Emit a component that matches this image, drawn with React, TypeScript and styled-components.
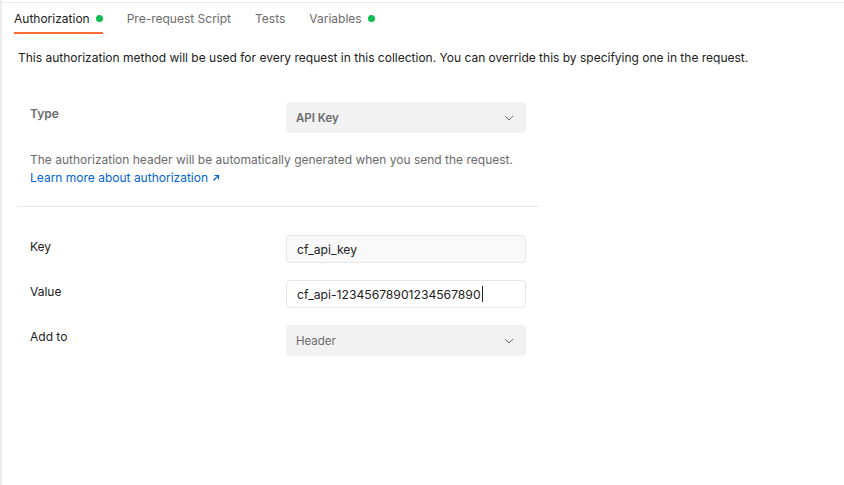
import styled, { createGlobalStyle } from 'styled-components';

const GlobalStyle = createGlobalStyle`
  html, body {
    margin: 0;
    padding: 0;
    background: #ffffff;
  }
  body {
    font-family: Inter, 'Noto Sans', sans-serif;
    -webkit-font-smoothing: antialiased;
  }
`;

const Page = styled.div`
  width: 844px;
  height: 485px;
  box-sizing: border-box;
  border-left: 2px solid #ececec;
  padding-top: 2px;
  overflow: hidden;
`;

const TopRule = styled.div`
  height: 1px;
  background: #ebebeb;
`;

const TabBar = styled.div`
  display: flex;
  gap: 24px;
  padding-left: 12px;
  height: 31px;
`;

const Tab = styled.div<{ $active?: boolean }>`
  display: flex;
  align-items: center;
  gap: 6px;
  height: 100%;
  box-sizing: border-box;
  padding-top: 2px;
  font-size: 12px;
  color: ${(p) => (p.$active ? '#212121' : '#6b6b6b')};
  border-bottom: 2px solid ${(p) => (p.$active ? '#ff6c37' : 'transparent')};
`;

const Dot = styled.span`
  width: 7px;
  height: 7px;
  border-radius: 50%;
  background: #0cbb52;
`;

const Body = styled.div`
  padding: 0 0 0 15px;
`;

const Intro = styled.p`
  margin: 15px 0 0 1px;
  font-size: 12px;
  line-height: 18px;
  color: #212121;
`;

const Section = styled.div`
  width: 522px;
  padding: 0 13px;
  box-sizing: border-box;
`;

const TypeSection = styled(Section)`
  margin-top: 35px;
  padding-bottom: 19px;
  border-bottom: 1px solid #e6e6e6;
`;

const Fields = styled(Section)`
  margin-top: 28px;
  display: flex;
  flex-direction: column;
  gap: 17px;
`;

const Row = styled.div`
  display: grid;
  grid-template-columns: 256px 240px;
  align-items: start;
`;

const Label = styled.div<{ $muted?: boolean }>`
  font-size: 12px;
  line-height: 18px;
  padding-top: 3px;
  font-weight: ${(p) => (p.$muted ? 600 : 400)};
  color: ${(p) => (p.$muted ? '#6b6b6b' : '#212121')};
`;

const Select = styled.div<{ $bold?: boolean }>`
  height: 31px;
  box-sizing: border-box;
  background: #f2f2f2;
  border-radius: 4px;
  padding: 0 12px 0 10px;
  display: flex;
  align-items: center;
  justify-content: space-between;
  font-size: 11.5px;
  font-weight: ${(p) => (p.$bold ? 600 : 400)};
  color: #6b6b6b;
`;

const Input = styled.div<{ $filled?: boolean }>`
  height: 28px;
  box-sizing: border-box;
  background: ${(p) => (p.$filled ? '#f9f9f9' : '#ffffff')};
  border: 1px solid #e6e6e6;
  border-radius: 4px;
  padding: 0 10px;
  display: flex;
  align-items: center;
  font-size: 12.15px;
  color: #212121;
`;

const Caret = styled.span`
  display: inline-block;
  width: 1px;
  height: 16px;
  background: #212121;
  margin-left: 1px;
`;

const Help = styled.p`
  margin: 18px 0 0 0;
  font-size: 12px;
  line-height: 18px;
  color: #6b6b6b;
`;

const Link = styled.a`
  color: #0265d2;
  text-decoration: none;
  display: inline-flex;
  align-items: center;
  gap: 4px;
`;

function Chevron() {
  return (
    <svg width='10' height='6' viewBox='0 0 10 6' fill='none'>
      <path d='M1 1l4 4 4-4' stroke='#6b6b6b' strokeWidth='1' />
    </svg>
  );
}

function ArrowUpRight() {
  return (
    <svg width='8' height='8' viewBox='0 0 8 8' fill='none'>
      <path d='M1.5 6.5L6.5 1.5M2.5 1.5h4v4' stroke='#0265d2' strokeWidth='1.2' />
    </svg>
  );
}

export default function App() {
  return (
    <>
      <GlobalStyle />
      <Page>
        <TopRule />
        <TabBar>
          <Tab $active>
            Authorization <Dot />
          </Tab>
          <Tab>Pre-request Script</Tab>
          <Tab>Tests</Tab>
          <Tab>
            Variables <Dot />
          </Tab>
        </TabBar>
        <Body>
          <Intro>
            This authorization method will be used for every request in this collection. You can
            override this by specifying one in the request.
          </Intro>
          <TypeSection>
            <Row>
              <Label $muted>Type</Label>
              <Select $bold>
                API Key
                <Chevron />
              </Select>
            </Row>
            <Help>
              The authorization header will be automatically generated when you send the request.
              <br />
              <Link href='#'>
                Learn more about authorization <ArrowUpRight />
              </Link>
            </Help>
          </TypeSection>
          <Fields>
            <Row>
              <Label>Key</Label>
              <Input $filled>cf_api_key</Input>
            </Row>
            <Row>
              <Label>Value</Label>
              <Input>
                cf_api-12345678901234567890
                <Caret />
              </Input>
            </Row>
            <Row>
              <Label>Add to</Label>
              <Select>
                Header
                <Chevron />
              </Select>
            </Row>
          </Fields>
        </Body>
      </Page>
    </>
  );
}
